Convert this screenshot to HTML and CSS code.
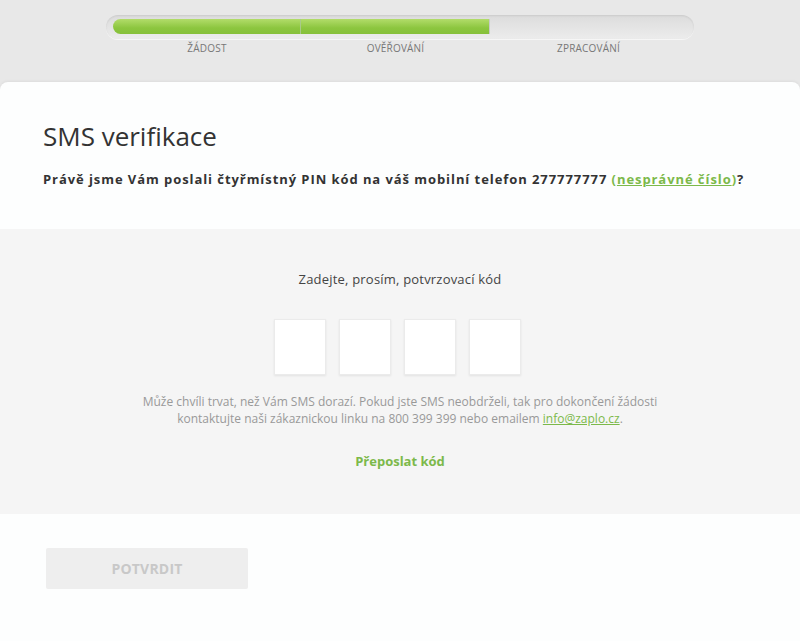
FILE: index.html
```html
<!DOCTYPE html>
<html lang="cs">
<head>
<meta charset="utf-8">
<title>SMS verifikace</title>
<link rel="stylesheet" href="styles.css">
</head>
<body>
<div class="progress">
  <div class="track">
    <div class="seg done first"></div>
    <div class="seg done second"></div>
    <div class="seg rest"></div>
  </div>
  <div class="labels">
    <span class="first">ŽÁDOST</span>
    <span class="second">OVĚŘOVÁNÍ</span>
    <span class="rest">ZPRACOVÁNÍ</span>
  </div>
</div>
<main class="card">
  <section class="head">
    <h1 class="title">SMS verifikace</h1>
    <p class="lead">Právě jsme Vám poslali čtyřmístný PIN kód na váš mobilní telefon 277777777 <a href="#" class="link">(<u>nesprávné číslo</u>)</a>?</p>
  </section>
  <section class="code">
    <p class="prompt">Zadejte, prosím, potvrzovací kód</p>
    <div class="boxes">
      <input class="box" maxlength="1">
      <input class="box" maxlength="1">
      <input class="box" maxlength="1">
      <input class="box" maxlength="1">
    </div>
    <p class="help">Může chvíli trvat, než Vám SMS dorazí. Pokud jste SMS neobdrželi, tak pro dokončení žádosti<br>kontaktujte naši zákaznickou linku na 800 399 399 nebo emailem <a href="#" class="mail">info@zaplo.cz</a>.</p>
    <a href="#" class="resend">Přeposlat kód</a>
  </section>
  <section class="foot">
    <button class="submit" disabled>POTVRDIT</button>
  </section>
</main>
</body>
</html>
```
FILE: styles.css
```css
* { box-sizing: border-box; }
html, body { margin: 0; padding: 0; }
body {
  background: #e8e8e8;
  font-family: "Open Sans", "DejaVu Sans", sans-serif;
  color: #333;
  width: 800px;
  height: 641px;
  overflow: hidden;
}
.progress {
  padding: 15px 106px 0 106px;
  height: 82px;
}
.track {
  height: 24px;
  border-radius: 12px;
  background: linear-gradient(#dcdcdc, #ececec);
  box-shadow: inset 0 1px 2px rgba(0,0,0,0.08), 0 1px 0 #f6f6f6;
  padding: 4px 7px 5px 7px;
  display: flex;
}
.seg {
  height: 15px;
  border-right: 1px solid #c9c9c9;
}
.first { flex: 0 0 188px; }
.second { flex: 0 0 189px; }
.rest { flex: 1; }
.seg.rest { border-right: none; }
.seg.done {
  background: linear-gradient(#b2dc6a, #8cc63f 60%, #86c03a);
}
.seg.done.first { border-radius: 8px 0 0 8px; border-right-color: #a9c98a; }
.labels {
  display: flex;
  padding: 2px 7px 0 7px;
}
.labels span {
  text-align: center;
  font-size: 10px;
  color: #777;
  letter-spacing: 0.2px;
}
.card {
  background: #fdfefe;
  border-radius: 8px 8px 0 0;
  box-shadow: 0 -1px 3px rgba(0,0,0,0.05);
  height: 559px;
}
.head {
  padding: 38px 43px 0 43px;
  height: 147px;
}
.title {
  margin: 0;
  font-size: 26px;
  font-weight: 400;
  color: #333;
  line-height: 32px;
}
.lead {
  margin: 18px 0 0 0;
  font-size: 13px;
  font-weight: 700;
  letter-spacing: 0.93px;
  color: #333;
  white-space: nowrap;
}
.link { color: #7cb94a; text-decoration: none; }
.link u { text-decoration-thickness: 1px; }
.code {
  background: #f5f5f5;
  height: 285px;
  display: flex;
  flex-direction: column;
  align-items: center;
  padding-top: 41px;
}
.prompt {
  margin: 0;
  font-size: 13px;
  color: #444;
  letter-spacing: 0.2px;
}
.boxes {
  display: flex;
  gap: 13px;
  margin-top: 31px;
  margin-right: 5px;
}
.box {
  width: 52px;
  height: 56px;
  border: 1px solid #ebebeb;
  background: #fff;
  box-shadow: 0 1px 2px rgba(0,0,0,0.08);
  padding: 0;
}
.help {
  margin: 18px 0 0 0;
  text-align: center;
  font-size: 12px;
  line-height: 17px;
  color: #999;
}
.mail { color: #7cb94a; }
.resend {
  margin-top: 25px;
  font-size: 13px;
  font-weight: 700;
  color: #7cb94a;
  text-decoration: none;
}
.foot {
  padding: 34px 46px 0 46px;
}
.submit {
  width: 202px;
  height: 41px;
  border: none;
  border-radius: 2px;
  background: #eeeeee;
  color: #c8c8c8;
  font-family: "Open Sans", "DejaVu Sans", sans-serif;
  font-weight: 700;
  font-size: 14px;
  letter-spacing: 0.2px;
}
```
